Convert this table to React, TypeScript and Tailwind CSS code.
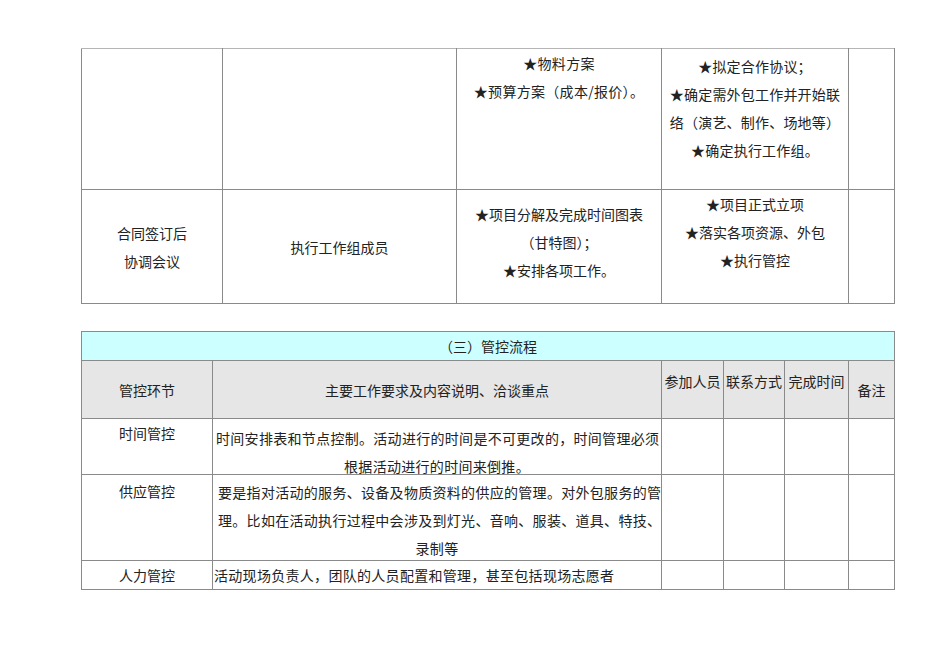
const font = { fontFamily: '"Noto Sans CJK SC", "Liberation Serif", serif' }

const cell = "border border-[#8a8a8a] p-0 text-[14px] leading-[28px] text-[#222]"

export default function App() {
  return (
    <div className="w-[950px] h-[672px] bg-white pl-[81px] pt-[48px]" style={font}>
      <table className="table-fixed border-collapse w-[813px]">
        <colgroup>
          <col className="w-[141px]" />
          <col className="w-[234px]" />
          <col className="w-[205px]" />
          <col className="w-[187px]" />
          <col className="w-[46px]" />
        </colgroup>
        <tbody>
          <tr className="h-[141px]">
            <td className={`${cell} border-t-[#b5b5b5]`}></td>
            <td className={`${cell} border-t-[#b5b5b5]`}></td>
            <td className={`${cell} border-t-[#b5b5b5] border-l-[#b5b5b5] align-top text-center tracking-[0.3px]`}>
              <div>
                <div>★物料方案</div>
                <div>★预算方案（成本/报价）。</div>
              </div>
            </td>
            <td className={`${cell} border-t-[#b5b5b5] align-top text-center tracking-[0.2px]`}>
              <div className="pt-[3px]">
                <div>★拟定合作协议；</div>
                <div>★确定需外包工作并开始联</div>
                <div>络（演艺、制作、场地等）</div>
                <div>★确定执行工作组。</div>
              </div>
            </td>
            <td className={`${cell} border-t-[#b5b5b5] border-l-[#b5b5b5]`}></td>
          </tr>
          <tr className="h-[114px]">
            <td className={`${cell} text-center align-middle`}>
              <div>合同签订后</div>
              <div>协调会议</div>
            </td>
            <td className={`${cell} text-center align-middle`}>执行工作组成员</td>
            <td className={`${cell} border-l-[#b5b5b5] align-top text-center`}>
              <div className="pt-[10px]">
                <div>★项目分解及完成时间图表</div>
                <div>（甘特图）；</div>
                <div>★安排各项工作。</div>
              </div>
            </td>
            <td className={`${cell} align-top text-center`}>
              <div>
                <div>★项目正式立项</div>
                <div>★落实各项资源、外包</div>
                <div>★执行管控</div>
              </div>
            </td>
            <td className={`${cell} border-l-[#b5b5b5]`}></td>
          </tr>
        </tbody>
      </table>

      <table className="table-fixed border-collapse w-[813px] mt-[27px]">
        <colgroup>
          <col className="w-[131px]" />
          <col className="w-[449px]" />
          <col className="w-[62px]" />
          <col className="w-[61px]" />
          <col className="w-[64px]" />
          <col className="w-[46px]" />
        </colgroup>
        <tbody>
          <tr className="h-[29px]">
            <td colSpan={6} className={`${cell} bg-[#ccffff] text-center align-middle`}>
              （三）管控流程
            </td>
          </tr>
          <tr className="h-[58px] bg-[#e6e6e6]">
            <td className={`${cell} text-center align-middle`}>管控环节</td>
            <td className={`${cell} text-center align-middle`}>主要工作要求及内容说明、洽谈重点</td>
            <td className={`${cell} text-center align-top`}>
              <div className="pt-[6px] whitespace-nowrap">参加人员</div>
            </td>
            <td className={`${cell} text-center align-top`}>
              <div className="pt-[6px] whitespace-nowrap">联系方式</div>
            </td>
            <td className={`${cell} text-center align-top`}>
              <div className="pt-[6px] whitespace-nowrap">完成时间</div>
            </td>
            <td className={`${cell} text-center align-middle`}>备注</td>
          </tr>
          <tr className="h-[56px]">
            <td className={`${cell} text-center align-top`}>
              <div>时间管控</div>
            </td>
            <td className={`${cell} align-top text-center tracking-[0.3px]`}>
              <div className="pt-[5px] h-[54px]">
                <div className="text-left pl-[3px] whitespace-nowrap">
                  时间安排表和节点控制。活动进行的时间是不可更改的，时间管理必须
                </div>
                <div>根据活动进行的时间来倒推。</div>
              </div>
            </td>
            <td className={cell}></td>
            <td className={cell}></td>
            <td className={cell}></td>
            <td className={cell}></td>
          </tr>
          <tr className="h-[86px]">
            <td className={`${cell} text-center align-top`}>
              <div className="pt-[2px]">供应管控</div>
            </td>
            <td className={`${cell} align-top text-center tracking-[0.3px]`}>
              <div className="pt-[3px] h-[84px]">
                <div className="text-left pl-[5px] whitespace-nowrap">
                  要是指对活动的服务、设备及物质资料的供应的管理。对外包服务的管
                </div>
                <div className="text-left pl-[5px] whitespace-nowrap">
                  理。比如在活动执行过程中会涉及到灯光、音响、服装、道具、特技、
                </div>
                <div>录制等</div>
              </div>
            </td>
            <td className={cell}></td>
            <td className={cell}></td>
            <td className={cell}></td>
            <td className={cell}></td>
          </tr>
          <tr className="h-[29px]">
            <td className={`${cell} text-center align-middle`}>人力管控</td>
            <td className={`${cell} align-middle tracking-[0.3px]`}>
              <div className="pl-[1px] whitespace-nowrap">
                活动现场负责人，团队的人员配置和管理，甚至包括现场志愿者
              </div>
            </td>
            <td className={cell}></td>
            <td className={cell}></td>
            <td className={cell}></td>
            <td className={cell}></td>
          </tr>
        </tbody>
      </table>
    </div>
  )
}
